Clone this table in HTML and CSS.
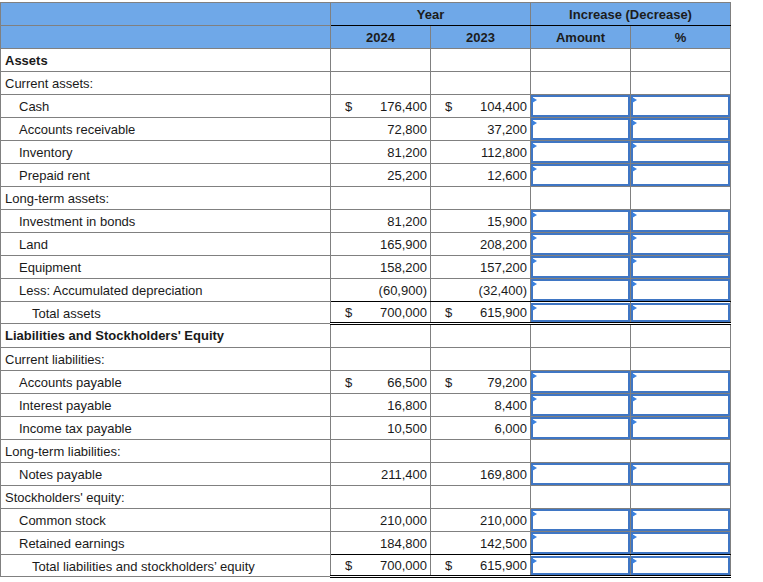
FILE: index.html
```html
<!DOCTYPE html>
<html>
<head>
<meta charset="utf-8">
<link rel="stylesheet" href="styles.css">
</head>
<body>
<table class="bs">
  <colgroup>
    <col class="c-label"><col class="c-num"><col class="c-num"><col class="c-num"><col class="c-num">
  </colgroup>
  <thead>
    <tr>
      <th></th>
      <th colspan="2" class="grp">Year</th>
      <th colspan="2" class="grp">Increase (Decrease)</th>
    </tr>
    <tr>
      <th></th>
      <th>2024</th>
      <th>2023</th>
      <th>Amount</th>
      <th>%</th>
    </tr>
  </thead>
  <tbody>
    <tr><td class="lab b">Assets</td><td></td><td></td><td></td><td></td></tr>
    <tr><td class="lab">Current assets:</td><td></td><td></td><td></td><td></td></tr>
    <tr><td class="lab l1">Cash</td><td class="n"><span class="cur">$</span>176,400</td><td class="n"><span class="cur">$</span>104,400</td><td class="in"><div class="inp"></div></td><td class="in"><div class="inp"></div></td></tr>
    <tr><td class="lab l1">Accounts receivable</td><td class="n">72,800</td><td class="n">37,200</td><td class="in"><div class="inp"></div></td><td class="in"><div class="inp"></div></td></tr>
    <tr><td class="lab l1">Inventory</td><td class="n">81,200</td><td class="n">112,800</td><td class="in"><div class="inp"></div></td><td class="in"><div class="inp"></div></td></tr>
    <tr><td class="lab l1">Prepaid rent</td><td class="n">25,200</td><td class="n">12,600</td><td class="in"><div class="inp"></div></td><td class="in"><div class="inp"></div></td></tr>
    <tr><td class="lab">Long-term assets:</td><td></td><td></td><td></td><td></td></tr>
    <tr><td class="lab l1">Investment in bonds</td><td class="n">81,200</td><td class="n">15,900</td><td class="in"><div class="inp"></div></td><td class="in"><div class="inp"></div></td></tr>
    <tr><td class="lab l1">Land</td><td class="n">165,900</td><td class="n">208,200</td><td class="in"><div class="inp"></div></td><td class="in"><div class="inp"></div></td></tr>
    <tr><td class="lab l1">Equipment</td><td class="n">158,200</td><td class="n">157,200</td><td class="in"><div class="inp"></div></td><td class="in"><div class="inp"></div></td></tr>
    <tr class="pre"><td class="lab l1">Less: Accumulated depreciation</td><td class="n">(60,900)</td><td class="n">(32,400)</td><td class="in"><div class="inp"></div></td><td class="in"><div class="inp"></div></td></tr>
    <tr class="tot"><td class="lab l2">Total assets</td><td class="n"><span class="cur">$</span>700,000</td><td class="n"><span class="cur">$</span>615,900</td><td class="in"><div class="inp"></div></td><td class="in"><div class="inp"></div></td></tr>
    <tr><td class="lab b">Liabilities and Stockholders' Equity</td><td></td><td></td><td></td><td></td></tr>
    <tr><td class="lab">Current liabilities:</td><td></td><td></td><td></td><td></td></tr>
    <tr><td class="lab l1">Accounts payable</td><td class="n"><span class="cur">$</span>66,500</td><td class="n"><span class="cur">$</span>79,200</td><td class="in"><div class="inp"></div></td><td class="in"><div class="inp"></div></td></tr>
    <tr><td class="lab l1">Interest payable</td><td class="n">16,800</td><td class="n">8,400</td><td class="in"><div class="inp"></div></td><td class="in"><div class="inp"></div></td></tr>
    <tr><td class="lab l1">Income tax payable</td><td class="n">10,500</td><td class="n">6,000</td><td class="in"><div class="inp"></div></td><td class="in"><div class="inp"></div></td></tr>
    <tr><td class="lab">Long-term liabilities:</td><td></td><td></td><td></td><td></td></tr>
    <tr><td class="lab l1">Notes payable</td><td class="n">211,400</td><td class="n">169,800</td><td class="in"><div class="inp"></div></td><td class="in"><div class="inp"></div></td></tr>
    <tr><td class="lab">Stockholders' equity:</td><td></td><td></td><td></td><td></td></tr>
    <tr><td class="lab l1">Common stock</td><td class="n">210,000</td><td class="n">210,000</td><td class="in"><div class="inp"></div></td><td class="in"><div class="inp"></div></td></tr>
    <tr class="pre"><td class="lab l1">Retained earnings</td><td class="n">184,800</td><td class="n">142,500</td><td class="in"><div class="inp"></div></td><td class="in"><div class="inp"></div></td></tr>
    <tr class="tot"><td class="lab l2">Total liabilities and stockholders’ equity</td><td class="n"><span class="cur">$</span>700,000</td><td class="n"><span class="cur">$</span>615,900</td><td class="in"><div class="inp"></div></td><td class="in"><div class="inp"></div></td></tr>
  </tbody>
</table>
</body>
</html>
```
FILE: styles.css
```css
html, body {
  margin: 0;
  padding: 0;
  background: #fff;
}
body {
  padding-top: 2px;
  font-family: "Liberation Sans", Arial, sans-serif;
  font-size: 13px;
  color: #1a1a1a;
}
.bs {
  border-collapse: collapse;
  table-layout: fixed;
  width: 731px;
}
.c-label { width: 330px; }
.c-num { width: 100px; }
.bs th, .bs td {
  border: 1px solid #808080;
  height: 22px;
  padding: 0;
  vertical-align: middle;
  white-space: nowrap;
}
.bs th {
  background: #6fa8e8;
  font-weight: bold;
  text-align: center;
  color: #1c1c1c;
}
.bs th.grp {
  border-bottom-color: #000;
}
.lab { padding-left: 4px !important; text-align: left; }
.lab.l1 { padding-left: 18px !important; }
.lab.l2 { padding-left: 31px !important; }
.b { font-weight: bold; }
.n {
  text-align: right;
  padding-right: 3px !important;
}
.cur {
  float: left;
  padding-left: 14px;
}
.in { padding: 0; }
.inp {
  position: relative;
  box-sizing: border-box;
  height: 22px;
  border: 2px solid #3f76c4;
  background: #fff;
}
.inp::before {
  content: "";
  position: absolute;
  left: -1px;
  top: 0;
  border-left: 5px solid #3a80dd;
  border-top: 3px solid transparent;
  border-bottom: 3px solid transparent;
}
.pre td:not(.lab) { border-bottom: 1px solid #000; }
.bs .tot td { height: 19px; padding-top: 1px; }
.tot td:not(.lab) { border-bottom: 3px double #000; }
.tot .inp { height: 19px; }
```
